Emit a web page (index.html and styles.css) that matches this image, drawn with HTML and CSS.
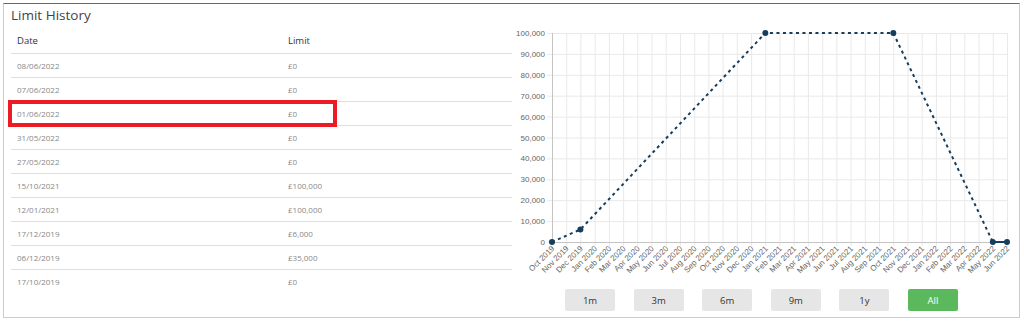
FILE: index.html
```html
<!DOCTYPE html>
<html lang="en">
<head>
<meta charset="utf-8">
<title>Limit History</title>
<link rel="stylesheet" href="styles.css">
</head>
<body>
<div class="card">
  <div class="history">
    <h2 class="title">Limit History</h2>
    <div class="table">
      <div class="row head"><span>Date</span><span>Limit</span></div>
      <div class="row"><span>08/06/2022</span><span>£0</span></div>
      <div class="row"><span>07/06/2022</span><span>£0</span></div>
      <div class="row marked"><span>01/06/2022</span><span>£0</span><i class="highlight"></i></div>
      <div class="row"><span>31/05/2022</span><span>£0</span></div>
      <div class="row"><span>27/05/2022</span><span>£0</span></div>
      <div class="row"><span>15/10/2021</span><span>£100,000</span></div>
      <div class="row"><span>12/01/2021</span><span>£100,000</span></div>
      <div class="row"><span>17/12/2019</span><span>£6,000</span></div>
      <div class="row"><span>06/12/2019</span><span>£35,000</span></div>
      <div class="row"><span>17/10/2019</span><span>£0</span></div>
    </div>
  </div>
  <div class="chart-col">
    <svg class="chart" width="507" height="281" viewBox="0 0 507 281">
      <g transform="translate(-512,-4)">
        <path class="grid" d="M547 242.5H1007 M547 221.6H1007 M547 200.7H1007 M547 179.8H1007 M547 158.9H1007 M547 138H1007 M547 117.1H1007 M547 96.2H1007 M547 75.3H1007 M547 54.4H1007 M547 33.5H1007
        M566.7 33V246 M580.9 33V246 M595.2 33V246 M609.4 33V246 M623.6 33V246 M637.8 33V246 M652 33V246 M666.2 33V246 M680.5 33V246 M694.7 33V246 M708.9 33V246 M723.1 33V246 M737.3 33V246 M751.6 33V246 M765.8 33V246 M780 33V246 M794.2 33V246 M808.4 33V246 M822.7 33V246 M836.9 33V246 M851.1 33V246 M865.3 33V246 M879.5 33V246 M893.8 33V246 M908 33V246 M922.2 33V246 M936.4 33V246 M950.6 33V246 M964.8 33V246 M979.1 33V246 M993.3 33V246 M1007.5 33V246"/>
        <path class="axis" d="M552.5 33V243 M552 242.5H1007"/>
        <g class="ylab">
          <text x="545" y="36">100,000</text>
          <text x="545" y="57">90,000</text>
          <text x="545" y="78">80,000</text>
          <text x="545" y="99">70,000</text>
          <text x="545" y="120">60,000</text>
          <text x="545" y="141">50,000</text>
          <text x="545" y="161">40,000</text>
          <text x="545" y="182">30,000</text>
          <text x="545" y="203">20,000</text>
          <text x="545" y="224">10,000</text>
          <text x="545" y="245">0</text>
        </g>
        <g class="xlab">
          <text transform="translate(555,249) rotate(-45)">Oct 2019</text>
          <text transform="translate(569.2,249) rotate(-45)">Nov 2019</text>
          <text transform="translate(583.4,249) rotate(-45)">Dec 2019</text>
          <text transform="translate(597.7,249) rotate(-45)">Jan 2020</text>
          <text transform="translate(611.9,249) rotate(-45)">Feb 2020</text>
          <text transform="translate(626.1,249) rotate(-45)">Mar 2020</text>
          <text transform="translate(640.3,249) rotate(-45)">Apr 2020</text>
          <text transform="translate(654.5,249) rotate(-45)">May 2020</text>
          <text transform="translate(668.8,249) rotate(-45)">Jun 2020</text>
          <text transform="translate(683,249) rotate(-45)">Jul 2020</text>
          <text transform="translate(697.2,249) rotate(-45)">Aug 2020</text>
          <text transform="translate(711.4,249) rotate(-45)">Sep 2020</text>
          <text transform="translate(725.6,249) rotate(-45)">Oct 2020</text>
          <text transform="translate(739.8,249) rotate(-45)">Nov 2020</text>
          <text transform="translate(754.1,249) rotate(-45)">Dec 2020</text>
          <text transform="translate(768.3,249) rotate(-45)">Jan 2021</text>
          <text transform="translate(782.5,249) rotate(-45)">Feb 2021</text>
          <text transform="translate(796.7,249) rotate(-45)">Mar 2021</text>
          <text transform="translate(810.9,249) rotate(-45)">Apr 2021</text>
          <text transform="translate(825.2,249) rotate(-45)">May 2021</text>
          <text transform="translate(839.4,249) rotate(-45)">Jun 2021</text>
          <text transform="translate(853.6,249) rotate(-45)">Jul 2021</text>
          <text transform="translate(867.8,249) rotate(-45)">Aug 2021</text>
          <text transform="translate(882,249) rotate(-45)">Sep 2021</text>
          <text transform="translate(896.3,249) rotate(-45)">Oct 2021</text>
          <text transform="translate(910.5,249) rotate(-45)">Nov 2021</text>
          <text transform="translate(924.7,249) rotate(-45)">Dec 2021</text>
          <text transform="translate(938.9,249) rotate(-45)">Jan 2022</text>
          <text transform="translate(953.1,249) rotate(-45)">Feb 2022</text>
          <text transform="translate(967.3,249) rotate(-45)">Mar 2022</text>
          <text transform="translate(981.6,249) rotate(-45)">Apr 2022</text>
          <text transform="translate(995.8,249) rotate(-45)">May 2022</text>
          <text transform="translate(1010,249) rotate(-45)">Jun 2022</text>
        </g>
        <path class="line dashed" d="M552 242L580.4 229.5L765.3 33L893.3 33L992.8 242"/>
        <path class="line" d="M992.8 242L1007 242"/>
        <g class="points">
          <circle cx="552" cy="242" r="3"/>
          <circle cx="580.4" cy="229.5" r="3"/>
          <circle cx="765.3" cy="33" r="3"/>
          <circle cx="893.3" cy="33" r="3"/>
          <circle cx="992.8" cy="242" r="3"/>
          <circle cx="1007" cy="242" r="3"/>
        </g>
      </g>
    </svg>
    <div class="ranges">
      <button class="range">1m</button>
      <button class="range">3m</button>
      <button class="range">6m</button>
      <button class="range">9m</button>
      <button class="range">1y</button>
      <button class="range active">All</button>
    </div>
  </div>
</div>
</body>
</html>
```
FILE: styles.css
```css
body {
  margin: 0;
  background: #fff;
  font-family: "Open Sans", "Liberation Sans", sans-serif;
}

.card {
  margin: 3px 0 0 3px;
  width: 1017px;
  box-sizing: border-box;
  border: 1px solid #cccccc;
  border-top-color: #d8383c;
  display: flex;
  padding: 0 0 6px 7px;
}

.history {
  width: 501px;
  flex: none;
}

.title {
  margin: 1px 0 0 0;
  font-size: 13.5px;
  font-weight: 400;
  line-height: 20px;
  color: #444;
}

.row {
  position: relative;
  display: grid;
  grid-template-columns: 271px 1fr;
  height: 24px;
  box-sizing: border-box;
  border-bottom: 1px solid #dddddd;
  font-size: 8px;
  line-height: 23px;
  color: #888;
}

.row:last-child {
  border-bottom: 0;
}

.row span {
  padding-left: 6px;
}

.row.head {
  height: 29px;
  padding-top: 9px;
  font-size: 9.5px;
  line-height: 13px;
  color: #333;
}

.highlight {
  position: absolute;
  left: -3px;
  top: -2px;
  width: 329px;
  height: 27px;
  box-sizing: border-box;
  border: 4px solid #ed1c24;
}

.chart-col {
  flex: 1;
  display: flex;
  flex-direction: column;
}

.chart {
  display: block;
}

.grid {
  fill: none;
  stroke: #e9e9e9;
  stroke-width: 1;
}

.axis {
  fill: none;
  stroke: #c4c4c4;
  stroke-width: 1;
}

.ylab text {
  font-family: "Liberation Sans", Arial, sans-serif;
  font-size: 8px;
  fill: #666;
  text-anchor: end;
}

.xlab text {
  font-family: "Liberation Sans", Arial, sans-serif;
  font-size: 8px;
  fill: #666;
  text-anchor: end;
}

.line {
  fill: none;
  stroke: #173d5c;
  stroke-width: 2;
}

.line.dashed {
  stroke-dasharray: 3 3.5;
}

.points circle {
  fill: #173d5c;
}

.ranges {
  display: flex;
  gap: 18.6px;
  padding-left: 53px;
  margin-top: 4px;
}

.range {
  width: 50px;
  height: 22px;
  padding: 0;
  border: 0;
  border-radius: 2px;
  background: #e6e6e6;
  font-family: "Open Sans", "Liberation Sans", sans-serif;
  font-size: 9.5px;
  color: #333;
}

.range.active {
  background: #5cb85c;
  color: #fff;
}
```
